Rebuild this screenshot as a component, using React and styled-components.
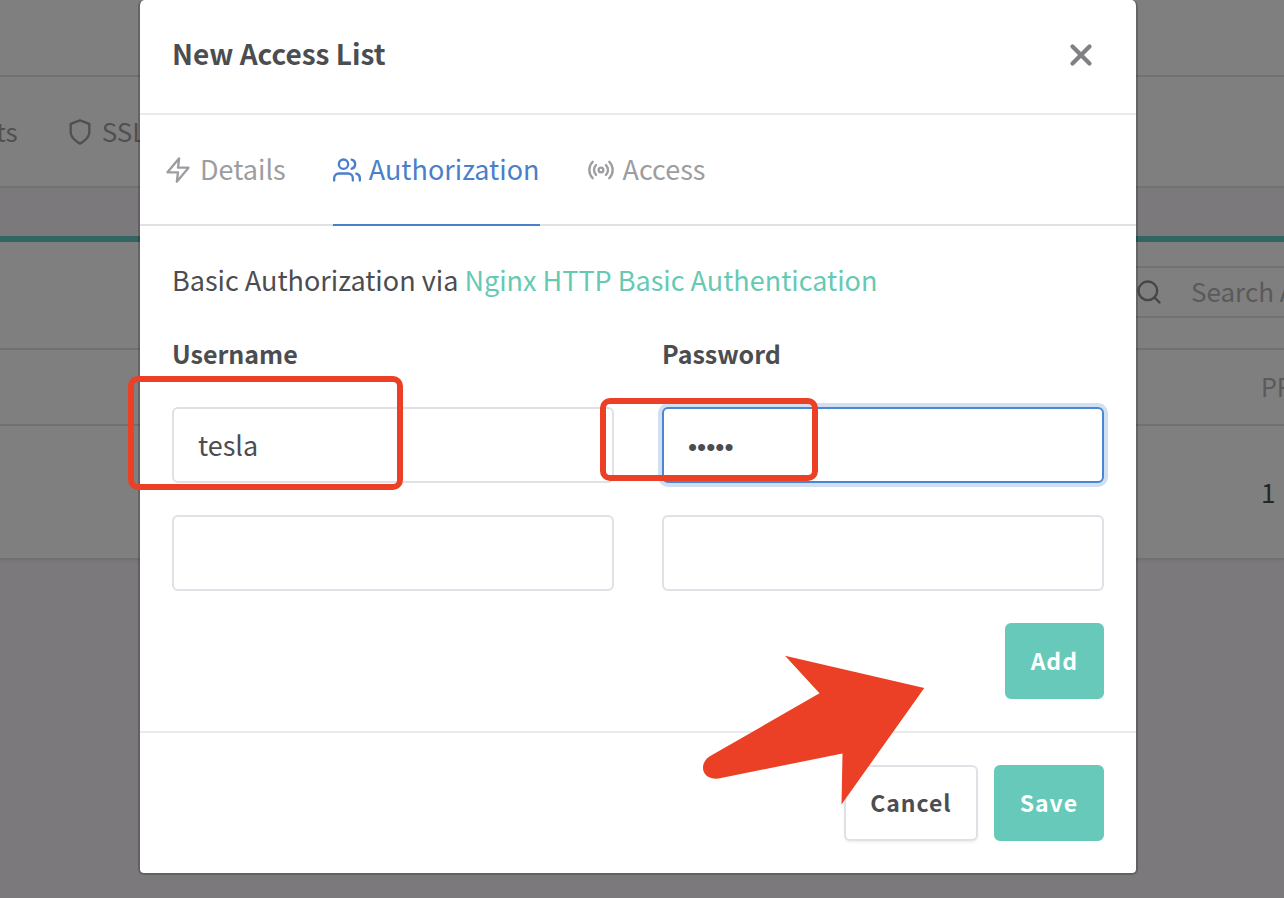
import React from "react";
import styled, { createGlobalStyle } from "styled-components";
import { FiZap, FiUsers, FiRadio, FiShield, FiSearch, FiX } from "react-icons/fi";

const GlobalStyle = createGlobalStyle`
  *, *::before, *::after { box-sizing: border-box; }
  body {
    margin: 0;
    font-family: "Noto Sans CJK SC", "Open Sans", sans-serif;
    font-size: 27px;
    line-height: 40px;
    color: #4b4d51;
  }
  input, button { font: inherit; color: inherit; }
`;

const Screen = styled.div`
  position: relative;
  min-height: 100vh;
  overflow: hidden;
  background: #f7f3f8;
`;

/* Page behind the dialog */
const TopBar = styled.header`
  height: 77px;
  background: #ffffff;
  border-bottom: 2px solid #e3e2e5;
`;

const MainNav = styled.nav`
  display: flex;
  align-items: center;
  height: 111px;
  padding-bottom: 2px;
  background: #ffffff;
  border-bottom: 2px solid #e3e2e5;
`;

const NavLink = styled.a`
  display: flex;
  align-items: center;
  gap: 8px;
  margin-left: -4px;
  margin-right: 48px;
  font-size: 26px;
  color: #a09fa2;
  text-decoration: none;
  & + & { margin-left: 0; }
  svg { margin-top: 2px; }
`;

const ListCard = styled.section`
  margin-top: 48px;
  background: #fffeff;
  border-top: 6px solid #60ccbe;
  border-bottom: 2px solid #e0dee2;
  box-shadow: 0 2px 4px rgba(0, 0, 0, 0.05);
`;

const CardHeader = styled.div`
  display: flex;
  justify-content: flex-end;
  padding: 24px 0 30px;
`;

const SearchBox = styled.label`
  display: flex;
  align-items: center;
  gap: 28px;
  width: 166px;
  height: 52px;
  padding-left: 15px;
  border: 2px solid #e3e2e5;
  border-right: 0;
  color: #8d8c90;
`;

const SearchInput = styled.input`
  flex: 1;
  min-width: 0;
  padding: 0 0 2px;
  border: 0;
  outline: 0;
  background: transparent;
  font-size: 26px;
  &::placeholder { color: #b4b3b6; opacity: 1; }
`;

const ListTable = styled.table`
  width: 100%;
  table-layout: fixed;
  border-collapse: collapse;
  border-top: 2px solid #e0dee2;
  th, td {
    padding: 0;
    overflow: hidden;
    text-align: left;
    white-space: nowrap;
  }
  th {
    height: 76px;
    padding-bottom: 2px;
    border-bottom: 2px solid #e0dee2;
    font-size: 25px;
    font-weight: 400;
    color: #b4b3b6;
  }
  td {
    height: 133px;
    font-size: 26px;
  }
  th:last-child { width: 23px; }
`;

const Backdrop = styled.div`
  position: absolute;
  inset: 0;
  display: flex;
  justify-content: center;
  align-items: flex-start;
  padding-right: 8px;
  background: rgba(0, 0, 0, 0.5);
`;

/* Dialog */
const Dialog = styled.form`
  position: relative;
  width: 100%;
  max-width: 1000px;
  background: #ffffff;
  background-clip: padding-box;
  border: 2px solid rgba(0, 0, 0, 0.2);
  border-top: 0;
  border-radius: 6px;
`;

const DialogHeader = styled.div`
  display: flex;
  align-items: center;
  justify-content: space-between;
  height: 115px;
  padding: 0 38px 4px 32px;
  border-bottom: 2px solid #e9ecef;
`;

const DialogTitle = styled.h1`
  margin: 0;
  padding-bottom: 4px;
  font-size: 28px;
  font-weight: 700;
`;

const CloseButton = styled.button`
  display: flex;
  padding: 0;
  border: 0;
  background: transparent;
  color: #818184;
`;

const Tabs = styled.div`
  display: flex;
  gap: 47px;
  height: 111px;
  padding: 0 24px;
  border-bottom: 2px solid #dfe1e4;
`;

const Tab = styled.button`
  display: flex;
  align-items: center;
  gap: 8px;
  margin-bottom: -2px;
  padding: 0 0 1px;
  border: 0;
  border-bottom: 2px solid ${(p) => (p.$active ? "#4a7fca" : "transparent")};
  background: transparent;
  color: ${(p) => (p.$active ? "#4a7fca" : "#9c9da0")};
  svg { margin-top: 2px; }
`;

const DialogBody = styled.div`
  display: flex;
  flex-direction: column;
  gap: 32px;
  padding: 34px 32px 32px;
`;

const Intro = styled.p`
  margin: 0;
`;

const IntroLink = styled.a`
  color: #66c9b3;
  text-decoration: none;
`;

const Credentials = styled.div`
  display: grid;
  grid-template-columns: 1fr 1fr;
  gap: 32px 48px;
`;

const FieldLabel = styled.label`
  padding-bottom: 1px;
  font-size: 25px;
  font-weight: 700;
  line-height: 42px;
`;

const Field = styled.input`
  width: 100%;
  height: 76px;
  padding: 0 24px 2px;
  border: 2px solid ${(p) => (p.$focused ? "#4a86d2" : "#dfe1e6")};
  border-radius: 6px;
  outline: 0;
  background: #ffffff;
  box-shadow: ${(p) => (p.$focused ? "0 0 0 4px #d1dff3" : "none")};
  &[type="password"] {
    padding: 4px 24px 0;
    font-family: "Liberation Sans", sans-serif;
    font-size: 26px;
  }
`;

const Button = styled.button`
  height: 76px;
  padding: 0 24px 2px;
  border: 2px solid ${(p) => (p.$plain ? "#dfe1e6" : "#66c9b9")};
  border-radius: 6px;
  background: ${(p) => (p.$plain ? "#ffffff" : "#66c9b9")};
  box-shadow: ${(p) => (p.$plain ? "0 2px 2px rgba(0, 0, 0, 0.05)" : "none")};
  color: ${(p) => (p.$plain ? "#4b4d51" : "#ffffff")};
  font-size: 23px;
  font-weight: 700;
  letter-spacing: 1px;
`;

const Actions = styled.div`
  display: flex;
  justify-content: flex-end;
  gap: 16px;
`;

const DialogFooter = styled(Actions)`
  padding: 32px;
  border-top: 2px solid #e9ecef;
`;

/* Red marks drawn over the dialog */
const Mark = styled.div`
  position: absolute;
  left: ${(p) => p.$left}px;
  top: ${(p) => p.$top}px;
  width: ${(p) => p.$width}px;
  height: ${(p) => p.$height}px;
  border: 6px solid #eb4025;
  border-radius: 10px;
  pointer-events: none;
`;

const Arrow = styled.svg`
  position: absolute;
  left: 560px;
  top: 650px;
  pointer-events: none;
`;

export default function App() {
  return (
    <>
      <GlobalStyle />
      <Screen>
        <TopBar />
        <MainNav>
          <NavLink href="#hosts">ts</NavLink>
          <NavLink href="#ssl">
            <FiShield size={28} />
            SSL
          </NavLink>
        </MainNav>
        <ListCard>
          <CardHeader>
            <SearchBox>
              <FiSearch size={28} />
              <SearchInput type="text" aria-label="Search" placeholder="Search A" />
            </SearchBox>
          </CardHeader>
          <ListTable>
            <thead>
              <tr>
                <th />
                <th>PR</th>
              </tr>
            </thead>
            <tbody>
              <tr>
                <td />
                <td>1</td>
              </tr>
            </tbody>
          </ListTable>
        </ListCard>

        <Backdrop>
          <Dialog role="dialog" aria-labelledby="dialog-title" onSubmit={(e) => e.preventDefault()}>
            <DialogHeader>
              <DialogTitle id="dialog-title">New Access List</DialogTitle>
              <CloseButton type="button" aria-label="Close">
                <FiX size={34} strokeWidth={3} />
              </CloseButton>
            </DialogHeader>
            <Tabs role="tablist">
              <Tab type="button" role="tab">
                <FiZap size={28} />
                Details
              </Tab>
              <Tab type="button" role="tab" aria-selected="true" $active>
                <FiUsers size={28} />
                Authorization
              </Tab>
              <Tab type="button" role="tab">
                <FiRadio size={28} />
                Access
              </Tab>
            </Tabs>
            <DialogBody>
              <Intro>
                Basic Authorization via <IntroLink href="#nginx">Nginx HTTP Basic Authentication</IntroLink>
              </Intro>
              <Credentials>
                <FieldLabel htmlFor="username-1">Username</FieldLabel>
                <FieldLabel htmlFor="password-1">Password</FieldLabel>
                <Field id="username-1" type="text" defaultValue="tesla" />
                <Field id="password-1" type="password" defaultValue="tesla" $focused />
                <Field type="text" aria-label="Username 2" />
                <Field type="password" aria-label="Password 2" />
              </Credentials>
              <Actions>
                <Button type="button">Add</Button>
              </Actions>
            </DialogBody>
            <DialogFooter>
              <Button type="button" $plain>Cancel</Button>
              <Button type="submit">Save</Button>
            </DialogFooter>

            <Mark $left={-12} $top={376} $width={275} $height={114} />
            <Mark $left={460} $top={398} $width={218} $height={83} />
            <Arrow width="230" height="160" viewBox="700 650 230 160" aria-hidden="true">
              <path
                d="M785 655.7 L924.3 688 L841.5 804.5 L842.5 753.5 L721 778 C711 780.5 703 775.5 703 768 C703 762 706.500 757.500 712 755 L819.500 693.300 Z"
                fill="#eb4025"
              />
            </Arrow>
          </Dialog>
        </Backdrop>
      </Screen>
    </>
  );
}
